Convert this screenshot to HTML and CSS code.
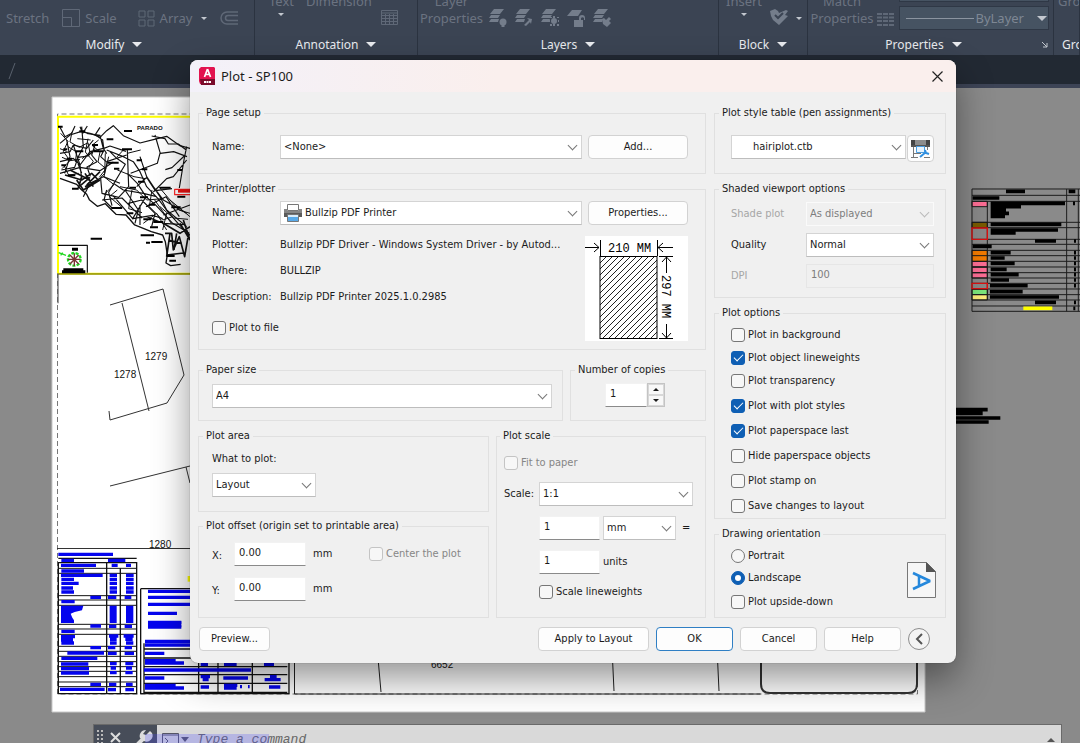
FILE: index.html
```html
<!DOCTYPE html>
<html lang="en">
<head>
<meta charset="utf-8">
<meta name="viewport" content="width=device-width, initial-scale=1">
<title>Plot - SP100</title>
<link rel="stylesheet" href="styles.css">
</head>
<body>
<div class="app">
  <header class="ribbon">
    <section class="panel modify">
      <div class="tools modify-tools">
        <span>Stretch</span>
        <span class="tool"><svg width="18" height="18" viewBox="0 0 18 18"><path d="M.5.5h17v17H.5zM.5 8.500h9v9" /></svg>Scale</span>
        <span class="tool array-tool"><svg width="17" height="17" viewBox="0 0 17 17"><path d="M1 1h6v6H1zM10 1h6v6h-6zM1 10h6v6H1zM10 10h6v6h-6z"/></svg>Array <i class="caret small"></i></span>
        <svg width="18" height="14" viewBox="0 0 18 14"><path d="M18 1H7a6 6 0 0 0 0 12h11M18 4.500H8a2.500 2.500 0 0 0 0 5h10" stroke-width="1.500"/></svg>
      </div>
      <h2>Modify <i class="caret"></i></h2>
    </section>
    <section class="panel">
      <div class="tools annotation-tools">
        <span class="stack">Text<span class="drop"><i class="caret small"></i></span></span>
        <span class="stack">Dimension<span class="drop"></span></span>
        <svg width="17" height="15" viewBox="0 0 17 15"><path d="M.5.5h16v14H.5zM.5 3h16M.5 5.500h16M.5 8.500h16M.5 11.500h16M4.500 4v10M8.500 4v10M12.500 4v10"/></svg>
      </div>
      <h2>Annotation <i class="caret"></i></h2>
    </section>
    <section class="panel">
      <div class="tools layer-tools">
        <span class="stack">Layer<span>Properties</span></span>
        <svg class="layer" width="18" height="18" viewBox="0 0 18 18"><path d="M5 0h10l-4 5H1zM2 6h9l-2 3H0zM2 10h8l-1 3H0z"/><circle cx="14" cy="13" r="3.500"/><path d="M12.500 16h3v2h-3z"/></svg>
        <svg class="layer" width="18" height="18" viewBox="0 0 18 18"><path d="M5 0h10l-4 5H1zM2 6h9l-2 3H0zM2 10h8l-1 3H0z"/><path d="M9 16l5-5-2-2 5 1-1 5-1-2-4 4z"/></svg>
        <svg class="layer" width="18" height="18" viewBox="0 0 18 18"><path d="M5 0h10l-4 5H1zM2 6h9l-2 3H0zM2 10h7l-1 3H0z"/><circle cx="13" cy="12" r="3"/><path d="M12 7h2v2h-2zM12 15h2v2h-2zM8 11h1v2H8zM17 11h1v2h-1zM9 8h2v1H9zM16 8h2v1h-2zM9 15h2v2H9zM16 15h2v2h-2z"/></svg>
        <svg class="layer" width="18" height="18" viewBox="0 0 18 18"><path d="M5 1h10l-4 6H0z"/><path d="M7 11h9v7H7zM12 11V9a3 3 0 0 1 6 0v2h-1V9a2 2 0 0 0-3 0v2z"/></svg>
        <svg class="layer" width="18" height="18" viewBox="0 0 18 18"><path d="M5 0h10l-4 5H1zM2 6h9l-2 3H0zM2 10h8l-1 3H0z"/><path d="M9 10l2-1 2 2 3-3 2 2-2 2 2 2-4 4-4-3z"/></svg>
      </div>
      <h2>Layers <i class="caret"></i></h2>
    </section>
    <section class="panel">
      <div class="tools block-tools">
        <span class="stack">Insert<span class="drop"><i class="caret small"></i></span></span>
        <svg class="layer" width="18" height="17" viewBox="0 0 18 17"><path d="M0 2l5-2 3 2 1 2 7-3 2 1-3 4 3 1-9 9-6-5-2-4z"/><path d="M5 6l3 3 5-5" stroke="#3b4453" stroke-width="2" fill="none"/></svg>
        <i class="caret small"></i>
      </div>
      <h2>Block <i class="caret"></i></h2>
    </section>
    <section class="panel properties">
      <div class="tools property-tools">
        <span class="stack">Match<span>Properties</span></span>
        <svg width="17" height="14" viewBox="0 0 17 14"><path d="M0 1h17M0 4.500h17M0 8h17M0 12h17" stroke-width="2" stroke-dasharray="5 1"/></svg>
        <div class="linetypes"><button type="button" class="linetype" aria-label="Lineweight"></button><button type="button" class="linetype"><span class="rule"></span>ByLayer<i class="caret"></i></button></div>
      </div>
      <h2>Properties <i class="caret"></i><svg class="launcher" width="6" height="6" viewBox="0 0 6 6"><path d="M0 0l5 5M5 1v4H1"/></svg></h2>
    </section>
    <section class="panel">
      <div class="tools group-tools"><span class="stack">Group<span class="drop"></span></span></div>
      <h2>Groups</h2>
    </section>
  </header>
  <nav class="file-tabs"><svg width="8" height="18" viewBox="0 0 8 18"><path d="M1 17L7 1"/></svg></nav>

  <main class="workspace">
    <svg class="drawing" role="img" aria-label="Layout sheet">
      <path class="paper" d="M52 9h873v615H52z"/>
      <path d="M57.500 606V26h860v580z" fill="none" stroke="#777" stroke-dasharray="5 3"/>
      <!-- location map -->
      <g transform="translate(40 2) scale(.3333)" fill="none" stroke="#111" stroke-width="3.500" stroke-linejoin="round">
        <path d="M54 550V80h500M54 551h500" stroke="#ff0" stroke-width="6"/>
        <path d="M54 552h500" stroke="#55551a" stroke-width="3"/>
        <path d="M54 640v-88" stroke="#555"/>
        <path d="M60 160l30-25 32-10 28 5 30 12 20-20 20-15 30 30 50 22 40-10 40-10 40 28 30 8 20 15"/>
        <path d="M60 112l15 28 20-10 10-22M120 110l8 20 14-22M140 130l40 6 10 40 20-8 48 16M60 190l30-5 10-20 40 10 20-25M60 215l40-10 20 20 30-40 40-10 10 16M64 240l40-8 10-30 30-4 20-20M180 112l-14 22 22 16 4 30-10 20 20 18-10 30M165 165l-10 30 16 20-30 16 10 28M125 110l5 60-20 40 15 40M80 150l10 50-16 50M100 165l20 60 5 40M60 250l60-18 60 10 40-26"/>
        <path d="M60 265l50 18 12 14 18 16 8 16 24 20 24-8 22 22 10 10 30 2 26 30 50 20 34 10 8 20 6 40-4 24 14 8 30-4" stroke-width="4"/>
        <path d="M200 180l50 20 30 15 20 30 20 45 34 36 30 40 30 34 40 40 20 40M210 185l20 20 26 18-50 84 10 40M262 180l4 110-30 32-50-12-4-44M200 215l60-20M262 250l30 30 26 40 30 26 50 54 50 30M220 280l30 20 60 10 40 10M130 320l20-40 40-20 50 20"/>
        <path d="M345 135l16 55 40-5 40 15M360 190l-8 30-80 30M335 138l40 8 10 16 30 0 24 18M440 170l-8 40-14 84M436 195l-40 38-20 6M440 210l-40 50-20 6-40 40M290 290l30-28 26 40 50-6M300 200l20 60 40 60 20 40 60 50M318 320l-40 66 60-10 30 10M340 290l30 40 70 40M318 350l60-30 40 60M186 330l60-6 40 40 20 20M200 300l-8 30 24 24M220 318l60 70M255 300l40 60-10 40M265 340l40-10 40 40-10 40M300 345v60M320 380l50 20 60 4M450 345l-80 30"/>
        <path d="M62 130l22 24-14 30 20 28-24 24M96 126l-6 30 28 16 26-14 6 30-24 18M112 146l40 4M144 146l-8 40 24 28-14 20M84 170l26 16-4 30M66 202l24 10 30-4M176 150l-20 16 24 20-6 30 24 20-20 26M196 190l-2 60-24 26M206 200l-14 60 30 24-30 30M60 176l20 8M72 226l14 30 30-6M232 300l-24 20 40 34M240 290l50 10 30 30 50-4M276 300l-10 56 40 12M336 300l-8 50 40 40 30-10M360 350l40 34 44 4M302 180l-40 10M232 240l50 20 34 6M250 180l-20 22M390 330l60 50M356 290l60 70 34 10M344 330l50 70M380 370l-12 50M310 400l40-30 30 50" stroke-width="3"/>
        <path d="M75 255l50 15 30-20 20 20-40 20M110 270l20 30 50-30M125 260l-10 35M150 262l-30 26M135 250l25 40M90 240l60 30M180 245l-40 40" stroke-width="5"/>
        <path d="M375 430l20 0 5 50 18-40 16 60 12-70M385 450l40 10M380 495l50-6M390 430l-10 70M410 430l-8 50M420 400l30 50M430 390l20 60M370 400l50 30 30-20" stroke-width="5"/>
        <path d="M54 110h14M118 124h18M200 148h20M252 123h24M156 165h18M70 178h12M106 184h24M160 184h30M80 206h16M64 226h14M84 256h22M96 296h20M152 446h34M290 211h16M246 178h30M268 293h20M360 293h32M306 238h16M294 275h18M326 344h20M394 352h28M310 388h24M340 396h30M330 412h24M302 436h40M334 456h34M318 458h12M260 370h20M214 354h32M300 322h24M412 320h24M380 498h24M388 512h20M222 236h16M412 240h14M204 218h32" stroke="#000" stroke-width="6"/>
        <path d="M54 466h88v82" />
        <path d="M70 539h60M66 545h70M96 478h18" stroke="#000" stroke-width="9"/>
        <g stroke="#22d822" stroke-width="7"><circle cx="103" cy="508" r="19" stroke-dasharray="9 4"/><path d="M56 488l22 8M62 496l6-8" stroke-width="4"/></g>
        <path d="M84 508h38M103 490v38M90 495l26 27M116 495l-26 27" stroke="#733" stroke-width="4"/>
        <path d="M404 298h60v16h-60z" stroke="#f22" fill="#fff"/><path d="M414 303h50" stroke="#e11" stroke-width="10"/>
      </g>
      <text class="map-title" x="137" y="42">PARADO</text>
      <!-- parcels -->
      <g fill="none" stroke="#333" stroke-width="1">
        <path d="M110 217l53-16 21 86-17 28-57 17-1-9M122 215l27 108M110 398l80-20M186 379l4 16"/>
        <path d="M57 460.500h230"/>
        <path d="M294.500 570v36h466M378 570l3 34M612 560l2 43M717 560l2 43" stroke="#222"/>
        <path d="M761 570v26q0 9 9 9h138q9 0 9-9v-40" stroke-width="2"/>
      </g>
      <text x="114" y="290">1278</text><text x="145" y="272">1279</text><text x="149" y="460">1280</text><text x="431" y="580">6652</text>
      <!-- area schedules -->
      <g transform="translate(40 442) scale(.3333)" fill="none" stroke="#111" stroke-width="3">
        <path d="M55 98h235v393H55zM200 98v393M241 115v376M55 85h235M302 176v315h445v-110M302 176h180M312 340v147h430M312 357h430M312 384h430M312 410h430M312 434h430M312 460h430M476 384v103M534 384v103M637 384v103" stroke-width="4"/>
        <path d="M55 115h235M55 130h235M55 197h235M55 210h235M55 226h235M55 283h235M55 297h235M55 313h235M55 349h235M55 364h235M55 379h235M55 395h235M55 410h235M55 424h235M55 440h235M55 456h235M55 470h235"/>
        <g stroke="#0404ee" stroke-width="10">
          <path d="M55 73h164M64 91h38M204 91h52M63 106h105M215 106h18M258 106h15M64 123h68M63 136h125M64 148h38M64 160h52M64 174h35M64 186h38M209 136h22M209 148h22M209 160h22M209 174h22M209 186h22M258 136h23M258 148h23M258 160h23M258 174h23M258 186h23M151 202h32M204 202h25M254 202h20M64 215h40M151 288h32M207 289h22M254 289h22M64 304h40M63 320h42M63 330h36M64 339h38M207 318h28M210 328h20M210 339h20M251 318h30M256 328h22M258 339h22M151 353h32M204 353h22M254 353h22M82 369h110M204 370h26M254 370h28M64 385h108M63 402h82M63 416h84M63 429h84M210 401h20M212 414h16M210 428h20M256 401h24M258 414h18M256 428h22M151 463h32M207 463h22M258 463h20M60 478h134M204 479h24M256 479h26"/>
          <path d="M63 227h67l-4 14-22 5-12 5 5 12 5 8v8H63zM209 227h21v52h-21zM258 227h22v52h-22z" fill="#0404ee" stroke="none"/>
          <path d="M324 184h140M324 202h140M324 223h140M324 250h87M324 277h100M324 291h100M315 334h140M315 345h140M315 370h58M315 392h92M315 399h117M312 420h321M315 444h58M315 466h92M315 474h117M482 440h28M488 449h18M482 471h25M550 444h74M552 466h40M552 474h38M600 470h6M624 470h5M690 440h20M674 449h48M687 471h34M552 403h38M672 403h30M482 403h22"/>
          <path d="M324 283h100" stroke-width="18"/>
        </g>
        <path d="M443 138h14v17h-14z" fill="#ff0" stroke="none"/>
      </g>
      <!-- colour legend -->
      <g transform="translate(940 82) scale(.3333)" fill="none" stroke="#1c1c1c" stroke-width="3">
        <path d="M96 94h46v16H96zM96 274h46v17H96zM96 291h46v17H96zM96 308h46v16H96z" fill="#ff6f96"/>
        <path d="M96 157h46v16H96z" fill="#7a5c00"/><path d="M96 241h46v33H96z" fill="#f57c00"/>
        <path d="M96 358h46v16H96z" fill="#7de87d"/><path d="M96 374h46v16H96z" fill="#ffee7d"/>
        <path d="M96 57h340M96 76h340M96 94h340M96 157h340M96 173h340M96 208h340M96 223h340M96 241h340M96 257h340M96 274h340M96 291h340M96 308h340M96 324h340M96 340h340M96 357h340M96 374h340M96 390h340M96 408h340M96 424h340M96 57v367M142 94v296M380 57v367M415 57v367"/>
        <path d="M96 174h46v34H96zM96 340h46v16H96z" stroke="#d11" stroke-width="4"/>
        <path d="M198 64h57M386 64h20M98 84h80M152 100h223M152 110h91M152 120h46M152 130h55M152 139h43M152 163h212M152 180h202M152 189h75M285 213h63M98 229h57M152 248h60M152 264h42M152 280h72M152 298h48M152 314h84M152 330h55M150 347h113M150 365h98M150 381h207M285 397h63M399 100h6M402 213h6M402 248h6M402 264h6M402 280h6M402 298h6M402 314h6M402 330h6M402 347h6M402 397h6M400 415h6M40 719h103M40 730h88M40 744h141M40 756h106" stroke="#000" stroke-width="11"/>
        <path d="M250 415h87" stroke="#ff0" stroke-width="11"/>
      </g>
    </svg>
  </main>

  <div class="command-bar">
    <div class="command-tools">
      <svg width="60" height="30" viewBox="0 0 60 30"><path d="M4 5v25M8 5v25" stroke="#bbb" stroke-width="2" stroke-dasharray="2 2"/><path d="M17 8l9 9M26 8l-9 9" stroke="#ddd" stroke-width="2"/><path d="M40 23l9-9" stroke="#ddd" stroke-width="4"/><path d="M56 6l-4 4-3-1 3-4a6 6 0 0 0-6 8l4 3a6 6 0 0 0 8-8z" fill="#ddd" stroke="none"/></svg>
    </div>
    <svg width="33" height="30" viewBox="0 0 33 30"><path d="M5.500 8.500h16v16h-16zM5 10h17" stroke="#556"/><path d="M8 13l3 3-3 3" stroke="#556"/><path d="M24 12h8l-4 5z" fill="#556" stroke="none"/></svg>
    <input class="command-input" type="text" placeholder="Type a command" aria-label="Command">
    <i class="caret up"></i>
    <span class="selection"></span>
  </div>

  <form class="dialog" role="dialog" aria-labelledby="dialog-title" onsubmit="return false">
    <div class="titlebar">
      <svg width="17" height="18" viewBox="0 0 17 18"><path d="M2 0h13l1 1v16H1L0 14V2z" fill="#e2134f"/><path d="M1 12h15v6H2z" fill="#7a0b2b"/><path d="M8.500 2L5.500 10M8.500 2L11.500 10M6.300 7.500h4.500" stroke="#fff" stroke-width="1.700" fill="none"/><path d="M5 15h7" stroke="#fff" stroke-width="2" stroke-dasharray="2 .500" fill="none"/></svg>
      <h1 id="dialog-title">Plot - SP100</h1>
      <button type="button" class="close" aria-label="Close"><svg width="11" height="11" viewBox="0 0 11 11"><path d="M.5.5l10 10M10.500.5l-10 10"/></svg></button>
    </div>

    <div class="columns">
      <div class="column">
        <fieldset class="page-setup">
          <legend>Page setup</legend>
          <div class="name-row">
            <label for="setup">Name:</label>
            <span class="combo"><select id="setup"><option>&lt;None&gt;</option></select></span>
            <button type="button" class="btn">Add...</button>
          </div>
        </fieldset>

        <fieldset class="printer">
          <legend>Printer/plotter</legend>
          <div class="name-row">
            <label for="printer">Name:</label>
            <span class="combo with-icon"><svg width="18" height="18" viewBox="0 0 18 18"><path d="M3.500.5h11v6h-11z" fill="#fff" stroke="#777"/><path d="M0 5h3v2h12V5h3v8H0z" fill="#858585"/><path d="M0 9h18v4H0z" fill="#5a5a5a"/><path d="M3.500 10.500h11v7h-11z" fill="#58a9e8" stroke="#777"/><path d="M4 11h10v2H4z" fill="#d8ecfb"/></svg><select id="printer"><option>Bullzip PDF Printer</option></select></span>
            <button type="button" class="btn">Properties...</button>
          </div>
          <div class="printer-body">
            <div class="printer-info">
              <dl>
                <dt>Plotter:</dt><dd>Bullzip PDF Driver - Windows System Driver - by Autod...</dd>
                <dt>Where:</dt><dd>BULLZIP</dd>
                <dt>Description:</dt><dd>Bullzip PDF Printer 2025.1.0.2985</dd>
              </dl>
              <label class="check"><input type="checkbox">Plot to file</label>
            </div>
            <svg class="preview" width="103" height="105" viewBox="0 0 103 105">
              <defs><pattern id="hatch" width="6" height="6" patternUnits="userSpaceOnUse"><path d="M-1 1l2-2M0 6l6-6M5 7l2-2" stroke="#222" stroke-width="1"/></pattern></defs>
              <rect x="15" y="20.500" width="57" height="82" fill="url(#hatch)" stroke="#000" stroke-width="1"/>
              <path d="M0 11.500h14M9 7l5 4.500L9 16M15.500 4v16M72.500 4v16M73 11.500h15M78 7l-5 4.500 5 4.500M74 20.500h14M74 102.500h14M81.500 21v16M77 26l4.500-5 4.500 5M81.500 88v14M77 97l4.500 5 4.500-5" fill="none" stroke="#000"/>
              <text x="23" y="16">210 MM</text>
              <text transform="translate(77 39) rotate(90)">297 MM</text>
            </svg>
          </div>
        </fieldset>

        <div class="paper-row">
          <fieldset class="paper-size">
            <legend>Paper size</legend>
            <span class="combo"><select aria-label="Paper size"><option>A4</option></select></span>
          </fieldset>
          <fieldset class="copies">
            <legend>Number of copies</legend>
            <div class="spinner">
              <input class="field" type="text" value="1" aria-label="Number of copies">
              <div class="spin-buttons"><button type="button" aria-label="More"><i class="caret up"></i></button><button type="button" aria-label="Fewer"><i class="caret"></i></button></div>
            </div>
          </fieldset>
        </div>

        <div class="area-row">
          <div class="area-column">
            <fieldset class="plot-area">
              <legend>Plot area</legend>
              <label for="what">What to plot:</label>
              <span class="combo"><select id="what"><option>Layout</option></select></span>
            </fieldset>
            <fieldset class="plot-offset">
              <legend>Plot offset (origin set to printable area)</legend>
              <div class="offset-grid">
                <label class="axis" for="off-x">X:</label><input class="field" id="off-x" type="text" value="0.00"><span>mm</span>
                <label class="check disabled"><input type="checkbox" disabled>Center the plot</label>
                <label class="axis" for="off-y">Y:</label><input class="field" id="off-y" type="text" value="0.00"><span>mm</span>
              </div>
            </fieldset>
          </div>
          <fieldset class="plot-scale">
            <legend>Plot scale</legend>
            <label class="check disabled"><input type="checkbox" disabled>Fit to paper</label>
            <div class="scale-grid">
              <label for="scale">Scale:</label>
              <span class="combo"><select id="scale"><option>1:1</option></select></span>
              <div class="unit-row"><input class="field" type="text" value="1" aria-label="Paper units"><span class="combo"><select aria-label="Unit"><option>mm</option></select></span><span class="equals">=</span></div>
              <div class="unit-row"><input class="field" id="units" type="text" value="1"><label for="units">units</label></div>
              <label class="check unit-row"><input type="checkbox">Scale lineweights</label>
            </div>
          </fieldset>
        </div>
      </div>

      <div class="column side">
        <fieldset class="style-table">
          <legend>Plot style table (pen assignments)</legend>
          <div class="style-row">
            <span class="combo"><select aria-label="Plot style table"><option>hairiplot.ctb</option></select></span>
            <button type="button" class="btn" aria-label="Edit plot style"><svg width="19" height="20" viewBox="0 0 19 20"><path d="M0 1h4v6H0zM15 1h4v6h-4z" fill="#444"/><path d="M4 1h11v5H4z" fill="#8c8c8c"/><path d="M0 6h19v2H0z" fill="#555"/><path d="M5.500 7.500h8v6h-8z" fill="#e7f3fd" stroke="#4a9de0"/><path d="M2.500 8v10M16.500 8v3M0 18.500h7M2 14.500h8M13 18.500h6" stroke="#777" fill="none"/><path d="M9 18l6-5M14 11l1 3 3 1" stroke="#2f8fe0" stroke-width="2" fill="none"/></svg></button>
          </div>
        </fieldset>

        <fieldset class="shaded">
          <legend>Shaded viewport options</legend>
          <div class="shaded-grid">
            <label class="disabled" for="shade">Shade plot</label><span class="combo off"><select id="shade" disabled><option>As displayed</option></select></span>
            <label for="quality">Quality</label><span class="combo"><select id="quality"><option>Normal</option></select></span>
            <label class="disabled" for="dpi">DPI</label><input class="field" id="dpi" type="text" value="100" disabled>
          </div>
        </fieldset>

        <fieldset class="options">
          <legend>Plot options</legend>
          <div class="option-list">
            <label class="check"><input type="checkbox">Plot in background</label>
            <label class="check"><input type="checkbox" checked>Plot object lineweights</label>
            <label class="check"><input type="checkbox">Plot transparency</label>
            <label class="check"><input type="checkbox" checked>Plot with plot styles</label>
            <label class="check"><input type="checkbox" checked>Plot paperspace last</label>
            <label class="check"><input type="checkbox">Hide paperspace objects</label>
            <label class="check"><input type="checkbox">Plot stamp on</label>
            <label class="check"><input type="checkbox">Save changes to layout</label>
          </div>
        </fieldset>

        <fieldset class="orientation">
          <legend>Drawing orientation</legend>
          <div class="orientation-row">
            <div class="orientation-list">
              <label class="check"><input type="radio" name="orient">Portrait</label>
              <label class="check"><input type="radio" name="orient" checked>Landscape</label>
              <label class="check"><input type="checkbox">Plot upside-down</label>
            </div>
            <svg width="29" height="36" viewBox="0 0 29 36"><path d="M.5.5h19l9 9v26H.500z" fill="#f6f6f6" stroke="#777"/><path d="M19 0l10 10H19z" fill="#555"/><path d="M6 11l17 8-17 8M12 14v10" fill="none" stroke="#2588dc" stroke-width="2.500" stroke-linejoin="bevel"/></svg>
          </div>
        </fieldset>
      </div>
    </div>

    <div class="footer">
      <button type="button" class="btn preview-btn">Preview...</button>
      <button type="button" class="btn apply-btn">Apply to Layout</button>
      <button type="submit" class="btn primary">OK</button>
      <button type="button" class="btn">Cancel</button>
      <button type="button" class="btn">Help</button>
      <button type="button" class="less" aria-label="Less options"><svg width="8" height="12" viewBox="0 0 8 12"><path d="M7 1L2 6l5 5"/></svg></button>
    </div>
  </form>
</div>
</body>
</html>
```
FILE: styles.css
```css
* { box-sizing: border-box; }

body {
  margin: 0;
  background: #8a8a8a;
  font-family: "DejaVu Sans Condensed", "Noto Sans", sans-serif;
  font-size: 11px;
  line-height: 16px;
  color: #1b1b1b;
}

.app {
  position: relative;
  display: flex;
  flex-direction: column;
  height: 100vh;
  min-height: 680px;
  overflow: hidden;
}

button, input, select { font: inherit; color: inherit; margin: 0; }

/* Ribbon */
.ribbon {
  display: grid;
  grid-template-columns: minmax(0, 255fr) minmax(0, 163fr) minmax(0, 301fr) minmax(0, 89fr) minmax(0, 246fr) minmax(0, 26fr);
  background: #3b4453;
  color: #6b7381;
  font-family: "Noto Sans", sans-serif;
  font-size: 13px;
  line-height: 17px;
  white-space: nowrap;
}
.panel { border-right: 1px solid #2b3340; overflow: hidden; }
.panel h2 {
  display: flex;
  position: relative;
  align-items: center;
  justify-content: center;
  gap: 8px;
  margin: 0;
  padding-top: 7px;
  height: 28px;
  font-size: 12px;
  font-weight: 400;
  color: #e8eaee;
}
.panel:last-child h2 { justify-content: flex-start; padding-left: 8px; }
.panel.modify h2 { padding-right: 26px; }
.tools {
  display: flex;
  align-items: flex-end;
  height: 27px;
}
.tools svg { flex: none; fill: none; stroke: #5f6877; }
.tools svg.layer { fill: #747d8b; stroke: none; }
.stack { display: flex; flex-direction: column; align-items: center; }
.drop { display: flex; height: 17px; padding-top: 3px; }
.tool { display: flex; align-items: center; gap: 5px; }
.modify-tools { gap: 13px; padding-left: 6px; align-items: center; padding-top: 9px; }
.array-tool { margin-left: 8px; }
.array-tool .caret { margin-left: 4px; }
.annotation-tools { gap: 12px; padding-left: 14px; }
.annotation-tools svg { margin-left: -3px; margin-bottom: 2px; }
.layer-tools { gap: 8px; padding-left: 4px; }
.layer-tools .stack { width: 59px; }
.block-tools { gap: 8px; padding-left: 7px; }
.block-tools svg { margin-bottom: 1px; }
.block-tools > .caret { margin-bottom: 7px; }
.property-tools { gap: 5px; padding-left: 4px; padding-right: 4px; height: 30px; }
.property-tools .stack { width: 60px; }
.panel.properties h2 { height: 25px; padding-top: 4px; padding-right: 14px; }
.property-tools .stack, .property-tools > svg { margin-bottom: 3px; }
.group-tools { padding-left: 4px; }
.linetypes { flex: 1; display: flex; flex-direction: column; gap: 4px; }
.linetype {
  display: flex;
  align-items: center;
  gap: 1px;
  width: 100%;
  height: 24px;
  padding: 0 1px 0 6px;
  border: 1px solid #2f3846;
  background: #465362;
  color: #7e8794;
}
.linetype .rule { flex: 1; height: 1px; background: #8b94a0; }
.linetype .caret { margin-left: 12px; color: #c3c8cf; }
.launcher { position: absolute; right: 5px; bottom: 7px; fill: none; stroke: #c3c8cf; }

.caret {
  flex: none;
  width: 0;
  height: 0;
  border: 5px solid transparent;
  border-top-color: currentColor;
  border-bottom: 0;
}
.caret.small { border-width: 3px 3px 0; border-top-color: #c3c8cf; }
.caret.up { border: 4px solid transparent; border-bottom-color: currentColor; border-top: 0; }

.file-tabs {
  height: 33px;
  padding: 7px 8px;
  background: #222933;
  border-bottom: 4px solid #3d4456;
}
.file-tabs svg { fill: none; stroke: #59616d; }

/* Drawing area */
.workspace { position: relative; flex: 1; min-height: 0; }
.drawing { display: block; width: 100%; height: 100%; }
.drawing .paper { fill: #fff; stroke: #c8c8c8; }
.drawing text { font-family: "Liberation Sans", Arial, sans-serif; font-size: 10px; fill: #111; }
.drawing .map-title { font-size: 6px; font-weight: 700; }

.command-bar {
  position: absolute;
  left: 93px;
  right: 18px;
  bottom: 0;
  display: flex;
  height: 19px;
  overflow: hidden;
  background: #d9d9d9;
  border: 1px solid #6a6a6a;
  border-bottom: 0;
  color: #555;
}
.command-bar svg { flex: none; fill: none; }
.command-tools { width: 63px; background: #474d59; height: 30px; }
.command-input {
  flex: 1;
  height: 28px;
  margin-left: 7px;
  padding: 0;
  border: 0;
  background: none;
  font-family: "Liberation Mono", monospace;
  font-size: 13px;
  font-style: italic;
}
.command-input::placeholder { color: #666; }
.command-bar > .caret { margin: 13px 6px 0 0; }
.selection { position: absolute; left: 51px; top: 9px; width: 124px; height: 10px; background: rgba(80, 80, 255, .25); }

/* Plot dialog */
.dialog {
  position: absolute;
  left: 190px;
  top: 60px;
  width: 766px;
  background: #f0f0f0;
  border-radius: 8px;
  box-shadow: 0 16px 36px rgba(0, 0, 0, .42), 0 0 1px rgba(0, 0, 0, .6);
}
.titlebar {
  display: flex;
  align-items: center;
  gap: 5px;
  height: 32px;
  padding: 0 12px 0 9px;
  border-radius: 8px 8px 0 0;
  background: linear-gradient(90deg, #f3f1f9, #faefed 40%, #faefed);
}
.titlebar h1 { flex: 1; margin: 0; font: 400 13px/18px "Noto Sans", sans-serif; }
.close { padding: 0; width: 14px; height: 14px; border: 0; background: none; display: grid; place-items: center; }
.close svg { fill: none; stroke: #222; stroke-width: 1.200px; }

.columns { display: flex; gap: 8px; padding: 13px 10px 0 8px; }
.column { display: flex; flex-direction: column; gap: 7px; flex: 1; min-width: 0; }
.column.side { flex: none; width: 232px; }

fieldset {
  min-width: 0;
  margin: 0;
  border: 1px solid #e0e0e0;
  padding: 0 17px 0 13px;
}
legend { margin-left: -9px; padding: 0 3px; height: 16px; white-space: nowrap; }
.side legend { margin-left: -12px; }

.btn {
  height: 24px;
  padding: 0;
  border: 1px solid #d2d2d2;
  border-radius: 4px;
  background: #fdfdfd;
  text-align: center;
}
.btn.primary { border-color: #2f7fc4; }

.combo { position: relative; display: block; }
.combo select {
  appearance: none;
  display: block;
  width: 100%;
  height: 24px;
  padding: 0 20px 0 3px;
  border: 1px solid #d4d4d4;
  border-bottom-color: #bdbdbd;
  border-radius: 0;
  background: #fff;
}
.combo::after {
  content: "";
  position: absolute;
  right: 6px;
  top: 7px;
  width: 6px;
  height: 6px;
  border: solid #777;
  border-width: 0 1px 1px 0;
  transform: rotate(45deg);
  pointer-events: none;
}
.combo.with-icon svg { position: absolute; left: 4px; top: 3px; }
.combo.with-icon select { padding-left: 24px; }
.combo.off select { border-color: #fafafa; background: #f0f0f0; color: #7d7d7d; opacity: 1; }
.combo.off::after { border-color: #bbb; }

.field {
  width: 100%;
  height: 24px;
  padding: 0 4px 4px;
  border: 1px solid #f2f2f2;
  border-bottom-color: #8a8a8a;
  border-radius: 0;
  background: #fff;
}
.field:disabled { background: #f0f0f0; border-color: #e6e6e6; color: #7d7d7d; }
.disabled { color: #a6a6a6; }

.check { display: flex; align-items: center; gap: 3px; }
.check.disabled { color: #868686; }
.check input {
  appearance: none;
  display: grid;
  place-items: center;
  flex: none;
  width: 14px;
  height: 14px;
  border: 1px solid #767676;
  border-radius: 3px;
  background: #f7f7f7;
}
.check input:disabled { border-color: #c4c4c4; }
.check input[type="radio"] { border-radius: 50%; }
.check input:checked { border-color: #0f5fb4; background: #0f5fb4; }
.check input[type="checkbox"]:checked::after {
  content: "";
  width: 8px;
  height: 4px;
  margin-bottom: 3px;
  border: solid #fff;
  border-width: 0 0 1px 1px;
  transform: rotate(-45deg);
}
.check input[type="radio"]:checked::after { content: ""; width: 6px; height: 6px; border-radius: 50%; background: #fff; }

.name-row { display: grid; grid-template-columns: 68px 1fr 100px; column-gap: 0; align-items: center; }
.name-row .combo { margin-right: 6px; }
.page-setup { padding-top: 14px; padding-bottom: 14px; }
.printer { padding-top: 4px; padding-bottom: 8px; }
.printer-body { display: flex; padding-top: 7px; }
.printer-info { flex: 1; min-width: 0; white-space: nowrap; }
.printer-info dl { display: grid; grid-template-columns: 68px 1fr; margin: 0 0 10px; line-height: 26px; }
.printer-info dd { margin: 0; }
.preview { flex: none; margin-top: 4px; background: #fff; }
.preview text { font: 12px "Liberation Mono", monospace; fill: #000; }

.paper-row { display: grid; grid-template-columns: 1fr 136px; gap: 7px; padding-top: 5px; }
.paper-size { padding: 6px 10px 12px 13px; }
.copies { padding: 5px 40px 0 34px; }
.copies legend { margin-left: -30px; }
.spinner { display: flex; }
.spin-buttons { display: flex; flex-direction: column; flex: none; width: 18px; border: 1px solid #c4c4c4; }
.spin-buttons button { display: grid; place-items: center; flex: 1; padding: 0; border: 1px solid #d8d8d8; background: #f8f8f8; }
.spin-buttons .caret { border-width: 3px 3px 0; }
.spin-buttons .caret.up { border-width: 0 3px 3px; }

.area-row { display: grid; grid-template-columns: 291px 1fr; gap: 7px; }
.area-column { display: flex; flex-direction: column; gap: 6px; }
.plot-area { padding-top: 7px; padding-bottom: 14px; }
.plot-area label { display: block; margin-bottom: 6px; }
.plot-area .combo { width: 104px; }
.plot-offset { padding-top: 8px; padding-bottom: 16px; }
.offset-grid { display: grid; grid-template-columns: 15px 72px 49px 1fr; column-gap: 7px; row-gap: 11px; align-items: center; }
.axis { padding-top: 4px; }
.plot-scale { padding: 11px 12px 0 7px; }
.plot-scale legend { margin-left: -4px; }
.scale-grid { display: grid; grid-template-columns: 35px 1fr; row-gap: 10px; align-items: center; padding-top: 11px; }
.unit-row { grid-column: 2; display: flex; align-items: center; gap: 3px; }
.unit-row .field { width: 61px; }
.unit-row .combo { width: 73px; }
.equals { padding-left: 3px; }

.style-table { padding: 14px 11px 11px 16px; }
.style-row { display: flex; gap: 1px; }
.style-row .combo { flex: 1; }
.style-row .combo select { padding-left: 21px; }
.style-row .btn { display: grid; place-items: center; width: 27px; height: 27px; }
.shaded { padding: 5px 11px 9px 16px; }
.shaded-grid { display: grid; grid-template-columns: 75px 1fr; row-gap: 7px; align-items: center; }
.options { padding: 2px 11px 0 16px; }
.option-list { display: grid; grid-template-rows: 23px 23px 24px; grid-auto-rows: 25px; }
.orientation { flex: 1; padding: 3px 9px 0 16px; }
.orientation-row { display: flex; justify-content: space-between; align-items: center; }
.orientation-list { display: grid; grid-template-rows: 21px 23px 25px; }

.footer { display: flex; align-items: center; gap: 7px; padding: 9px 26px 12px 9px; }
.footer .btn { width: 77px; }
.footer .preview-btn { width: 71px; margin-right: auto; }
.footer .apply-btn { width: 111px; }
.less { display: grid; place-items: center; width: 22px; height: 22px; padding: 0; border: 1px solid #8d8d8d; border-radius: 50%; background: #f4f4f4; }
.less svg { fill: none; stroke: #555; stroke-width: 2px; }
```
